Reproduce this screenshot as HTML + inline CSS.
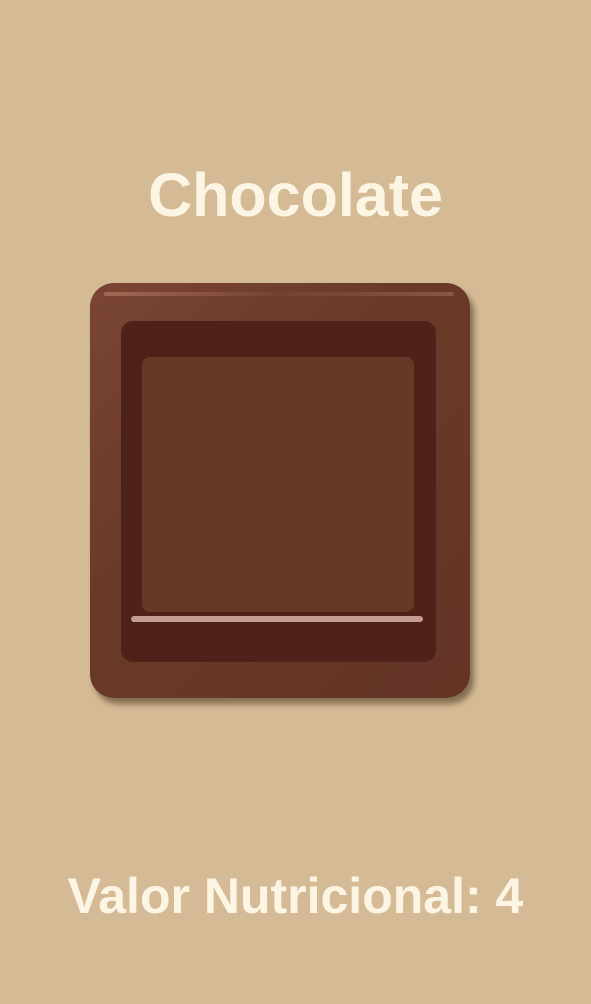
<!DOCTYPE html>
<html><head><style>
html,body{margin:0;padding:0}
body{width:591px;height:1004px;background:#d4ba95;position:relative;overflow:hidden;font-family:"Liberation Sans",sans-serif}
.t{position:absolute;left:0;width:591px;text-align:center;color:#fdf5e4;font-weight:bold}
.bar{position:absolute;left:90px;top:283px;width:380px;height:415px;border-radius:24px;background:linear-gradient(135deg,#7a4534 0%,#6a3a29 40%,#633425 100%);box-shadow:4px 6px 6px rgba(70,50,25,.55)}
.d{position:absolute;left:121px;top:321px;width:315px;height:341px;border-radius:12px;background:#4e2218}
.l{position:absolute;left:142px;top:357px;width:272px;height:255px;border-radius:8px;background:#653827}
.h{position:absolute;left:131px;top:616px;width:292px;height:6px;border-radius:3px;background:#c49a92}
.g{position:absolute;left:104px;top:292px;width:350px;height:4px;border-radius:2px;background:linear-gradient(90deg,rgba(200,140,120,.5),rgba(200,140,120,.05),rgba(200,140,120,.35))}
</style></head><body>
<div class="t" style="top:160px;font-size:61px;line-height:70px">Chocolate</div>
<div class="bar"></div>
<div class="g"></div>
<div class="d"></div>
<div class="l"></div>
<div class="h"></div>
<div class="t" style="top:867px;font-size:50px;line-height:58px">Valor Nutricional: 4</div>
</body></html>
